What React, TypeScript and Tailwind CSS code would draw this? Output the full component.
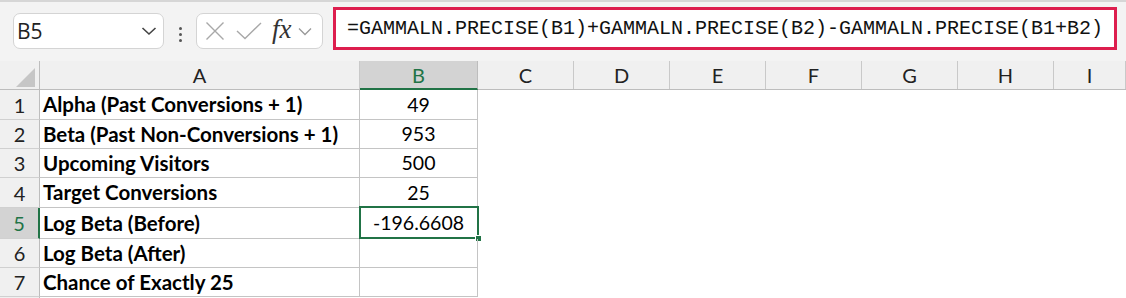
import React from "react";

const cols = [
  { l: "A", w: "w-[320px]" },
  { l: "B", w: "w-[118px]" },
  { l: "C", w: "w-[96px]" },
  { l: "D", w: "w-[96px]" },
  { l: "E", w: "w-[96px]" },
  { l: "F", w: "w-[96px]" },
  { l: "G", w: "w-[96px]" },
  { l: "H", w: "w-[96px]" },
  { l: "I", w: "w-[72px]" },
];

const rows = [
  { n: 1, a: "Alpha (Past Conversions + 1)", b: "49", h: "h-[30px]" },
  { n: 2, a: "Beta (Past Non-Conversions + 1)", b: "953", h: "h-[29px]" },
  { n: 3, a: "Upcoming Visitors", b: "500", h: "h-[29px]" },
  { n: 4, a: "Target Conversions", b: "25", h: "h-[30px]" },
  { n: 5, a: "Log Beta (Before)", b: "-196.6608", h: "h-[31px]" },
  { n: 6, a: "Log Beta (After)", b: "", h: "h-[29px]" },
  { n: 7, a: "Chance of Exactly 25", b: "", h: "h-[29px]" },
  { n: 8, a: "", b: "", h: "h-[29px]" },
];

export default function App() {
  return (
    <div className="w-[1126px] h-[298px] overflow-hidden bg-white font-['Lato',sans-serif] text-black">
      {/* Toolbar */}
      <div className="h-[61px] bg-[#f3f3f3] border-t-2 border-[#d6d6d6] flex items-start">
        <div className="ml-[13px] mt-[11px] w-[151px] h-[36px] bg-white border border-[#d4d4d4] rounded-[7px] flex items-center pl-[3px] pr-[6px]">
          <span className="text-[21px] text-[#222] font-['Open_Sans',sans-serif] leading-none">B5</span>
          <svg className="ml-auto" width="16" height="10" viewBox="0 0 16 10">
            <path d="M1.5 2 L8 8 L14.5 2" fill="none" stroke="#444" strokeWidth="1.6" />
          </svg>
        </div>
        <div className="ml-[14px] mt-[25px] w-[4px] flex flex-col items-center gap-[3px]">
          <span className="block w-[3px] h-[3px] bg-[#555] rounded-full" />
          <span className="block w-[3px] h-[3px] bg-[#555] rounded-full" />
          <span className="block w-[3px] h-[3px] bg-[#555] rounded-full" />
        </div>
        <div className="ml-[14px] mt-[11px] w-[127px] h-[36px] bg-white border border-[#d4d4d4] rounded-[7px] flex items-center pl-[8px]">
          <svg width="20" height="20" viewBox="0 0 20 20">
            <path d="M1.5 1.5 L18.5 18.5 M18.5 1.5 L1.5 18.5" stroke="#a8a8a8" strokeWidth="1.4" fill="none" />
          </svg>
          <svg className="ml-[11px]" width="26" height="18" viewBox="0 0 26 18">
            <path d="M1 9 L9 16.5 L25 1" stroke="#a8a8a8" strokeWidth="1.4" fill="none" />
          </svg>
          <span className="ml-[10px] font-['Liberation_Serif',serif] italic text-[27px] leading-none text-[#333] -mt-[4px]">
            fx
          </span>
          <svg className="ml-[6px]" width="14" height="9" viewBox="0 0 14 9">
            <path d="M1 1.5 L7 7.5 L13 1.5" fill="none" stroke="#999" strokeWidth="1.3" />
          </svg>
        </div>
        <div className="ml-[10px] mt-[5px] w-[784px] h-[43px] bg-white border-[3px] border-[#dd1e4e] flex items-center pl-[11px]">
          <span className="font-['Liberation_Mono',monospace] text-[20px] text-[#111] leading-none whitespace-nowrap">
            =GAMMALN.PRECISE(B1)+GAMMALN.PRECISE(B2)-GAMMALN.PRECISE(B1+B2)
          </span>
        </div>
      </div>

      {/* Column headers */}
      <div className="flex h-[29px] bg-[#f0f0f0] border-b border-[#bdbdbd]">
        <div className="w-[40px] shrink-0 border-r border-[#bdbdbd] relative">
          <svg className="absolute right-[4px] bottom-[2px]" width="19" height="19" viewBox="0 0 19 19">
            <path d="M19 0 L19 19 L0 19 Z" fill="#c6c6c6" />
          </svg>
        </div>
        {cols.map((c) =>
          c.l === "B" ? (
            <div
              key={c.l}
              className={`${c.w} shrink-0 bg-[#d3d3d3] border-r border-[#bdbdbd] border-b-2 border-b-[#217346] -mb-px flex items-center justify-center text-[20px] text-[#217346]`}
            >
              {c.l}
            </div>
          ) : (
            <div
              key={c.l}
              className={`${c.w} shrink-0 border-r border-[#c9c9c9] flex items-center justify-center text-[20px] text-[#222]`}
            >
              {c.l}
            </div>
          )
        )}
      </div>

      {/* Rows */}
      {rows.map((r) => (
        <div key={r.n} className={`flex ${r.h}`}>
          <div
            className={`w-[40px] shrink-0 border-b border-[#d0d0d0] flex items-center justify-center text-[20px] ${
              r.n === 5
                ? "bg-[#d3d3d3] text-[#217346] border-r-2 border-r-[#217346]"
                : "bg-[#f0f0f0] text-[#222] border-r border-r-[#bdbdbd]"
            }`}
          >
            {r.n <= 7 ? r.n : ""}
          </div>
          <div
            className={`w-[320px] shrink-0 flex items-center pl-[3px] text-[20.5px] font-bold whitespace-nowrap ${
              r.n <= 7 ? "border-r border-b border-[#c4c4c4]" : ""
            }`}
          >
            {r.a}
          </div>
          <div
            className={`w-[118px] shrink-0 relative flex items-center justify-center text-[19.5px] ${
              r.n <= 7 ? "border-r border-b border-[#c4c4c4]" : ""
            }`}
          >
            {r.b}
            {r.n === 5 && (
              <>
                <div className="absolute -left-px -top-[2px] -right-[2px] -bottom-[1px] border-2 border-[#217346]" />
                <div className="absolute -right-[5px] -bottom-[4px] w-[7px] h-[7px] bg-[#217346] border border-white" />
              </>
            )}
          </div>
          <div className="flex-1" />
        </div>
      ))}
    </div>
  );
}
